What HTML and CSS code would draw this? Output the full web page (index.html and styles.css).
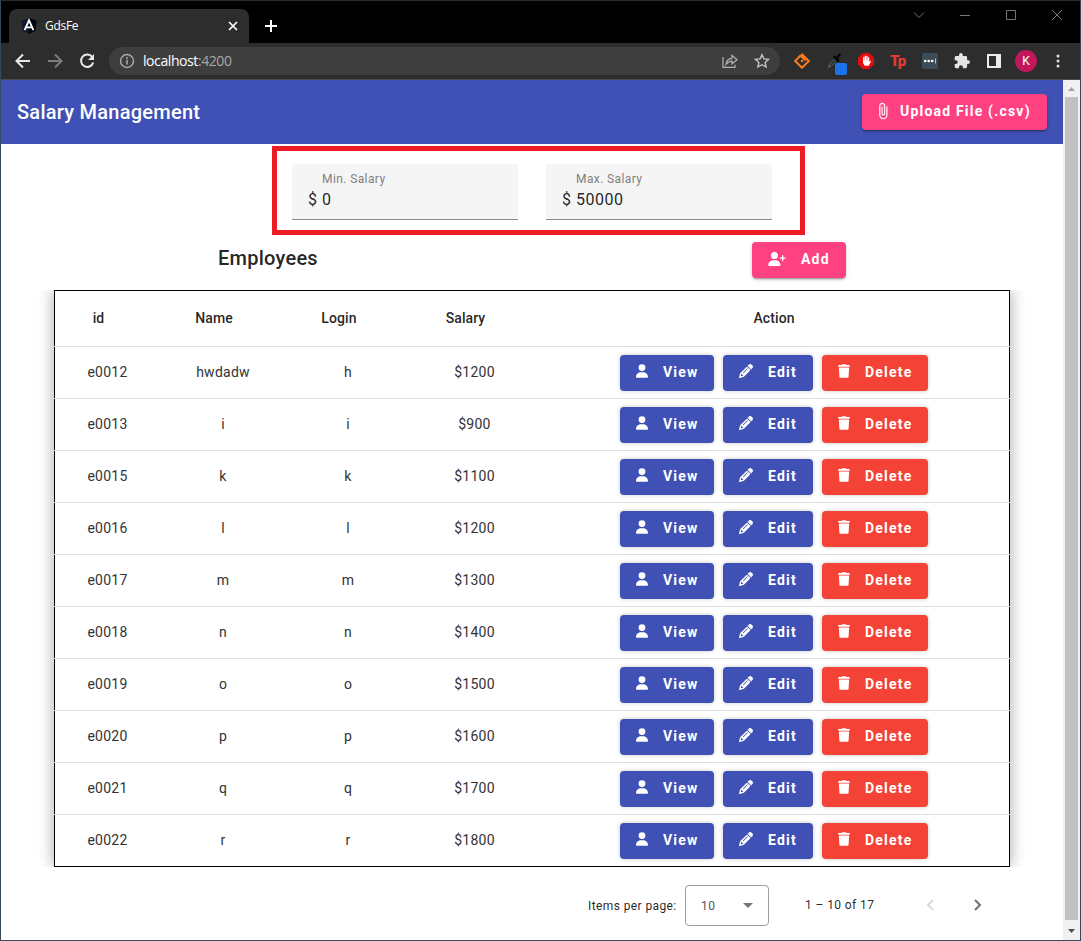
FILE: index.html
```html
<!DOCTYPE html>
<html lang="en">
<head>
<meta charset="utf-8">
<title>GdsFe</title>
<link rel="stylesheet" href="styles.css">
</head>
<body>
<svg class="defs" width="0" height="0">
  <symbol id="user" viewBox="0 0 448 512"><path d="M224 256A128 128 0 1 0 224 0a128 128 0 1 0 0 256zm-45.700 48C79.800 304 0 383.800 0 482.300C0 498.700 13.300 512 29.700 512H418.300c16.400 0 29.700-13.300 29.700-29.700C448 383.800 368.200 304 269.700 304H178.300z"/></symbol>
  <symbol id="user-plus" viewBox="0 0 640 512"><path d="M96 128a128 128 0 1 1 256 0A128 128 0 1 1 96 128zM0 482.300C0 383.800 79.800 304 178.300 304h91.400C368.200 304 448 383.800 448 482.300c0 16.400-13.300 29.700-29.700 29.700H29.700C13.300 512 0 498.700 0 482.300zM504 312V248H440c-13.300 0-24-10.700-24-24s10.700-24 24-24h64V136c0-13.300 10.700-24 24-24s24 10.700 24 24v64h64c13.300 0 24 10.700 24 24s-10.700 24-24 24H552v64c0 13.300-10.700 24-24 24s-24-10.700-24-24z"/></symbol>
  <symbol id="pencil" viewBox="0 0 512 512"><path d="M410.300 231l11.300-11.300-33.900-33.900-62.100-62.100L291.700 89.800l-11.300 11.300-22.600 22.600L58.600 322.900c-10.400 10.400-18 23.300-22.200 37.400L1 480.700c-2.500 8.400-.2 17.500 6.100 23.700s15.300 8.500 23.700 6.100l120.300-35.400c14.100-4.200 27-11.800 37.400-22.200L387.700 253.700 410.300 231zM160 399.400l-9.100 22.700c-4 3.100-8.500 5.400-13.300 6.900L59.400 452l23-78.100c1.400-4.900 3.800-9.400 6.900-13.300l22.700-9.100v32c0 8.800 7.200 16 16 16h32zM362.700 18.700L348.300 33.200 325.700 55.800 314.300 67.100l33.900 33.900 62.100 62.100 33.900 33.900 11.300-11.300 22.600-22.600 14.500-14.500c25-25 25-65.500 0-90.500L453.300 18.700c-25-25-65.500-25-90.500 0zm-47.400 168l-144 144c-6.200 6.200-16.400 6.200-22.600 0s-6.200-16.400 0-22.600l144-144c6.200-6.200 16.400-6.200 22.600 0s6.200 16.400 0 22.600z"/></symbol>
  <symbol id="trash" viewBox="0 0 448 512"><path d="M135.200 17.700L128 32H32C14.300 32 0 46.300 0 64S14.300 96 32 96H416c17.700 0 32-14.300 32-32s-14.300-32-32-32H320l-7.200-14.300C307.400 6.800 296.300 0 284.200 0H163.800c-12.100 0-23.200 6.800-28.600 17.700zM416 128H32L53.200 467c1.600 25.300 22.600 45 47.900 45H346.900c25.300 0 46.300-19.700 47.900-45L416 128z"/></symbol>
</svg>
<div class="window">
  <div class="tabstrip">
    <div class="tab">
      <svg class="favicon" width="16" height="16" viewBox="0 0 16 16"><path d="M8 0l7.500 2.700-1.100 10L8 16l-6.400-3.300-1.100-10z" fill="#111a2b"/><path d="M8 0l7.500 2.700-1.100 10L8 16z" fill="#02040c"/><path d="M3.600 12.200L8 2.300l4.400 9.900M5.200 9.300h5.600" fill="none" stroke="#fff" stroke-width="1.800"/></svg>
      <span class="tab-title">GdsFe</span>
      <svg class="tab-close" width="10" height="10" viewBox="0 0 10 10"><path d="M1 1l8 8M9 1l-8 8" stroke="#fff" stroke-width="1.700"/></svg>
    </div>
    <svg class="new-tab" width="12" height="12" viewBox="0 0 12 12"><path d="M6 0v12M0 6h12" stroke="#fff" stroke-width="2"/></svg>
    <div class="controls">
      <svg width="12" height="12" viewBox="0 0 12 12"><path d="M1 3.500l5 5 5-5"/></svg>
      <svg width="12" height="12" viewBox="0 0 12 12"><path d="M1 6.500h10"/></svg>
      <svg width="12" height="12" viewBox="0 0 12 12"><path d="M1.500 1.500h9v9h-9z"/></svg>
      <svg width="12" height="12" viewBox="0 0 12 12"><path d="M1 1l10 10M11 1L1 11"/></svg>
    </div>
  </div>
  <div class="toolbar">
    <div class="nav">
      <svg width="16" height="16" viewBox="0 0 16 16"><path d="M15 8H2M8 1.500L1.500 8 8 14.500" fill="none" stroke="#e8e8e8" stroke-width="2"/></svg>
      <svg width="16" height="16" viewBox="0 0 16 16"><path d="M1 8h13M8 1.500L14.500 8 8 14.500" fill="none" stroke="#7c7c7c" stroke-width="2"/></svg>
      <svg width="16" height="16" viewBox="0 0 16 16"><path d="M13.200 4A6.200 6.200 0 1 0 14.200 9.500" fill="none" stroke="#e8e8e8" stroke-width="2"/><path d="M15 1v6H9z" fill="#e8e8e8"/></svg>
    </div>
    <div class="address">
      <svg width="16" height="16" viewBox="0 0 16 16"><circle cx="8" cy="8" r="6.500" fill="none" stroke="#aaa" stroke-width="1.400"/><path d="M7.200 7h1.600v4.500H7.200zM7.200 4.300h1.600v1.600H7.200z" fill="#aaa"/></svg>
      <span class="url">localhost<span class="port">:4200</span></span>
      <svg class="share" width="16" height="16" viewBox="0 0 16 16"><path d="M1 4v10.300h12v-2.500M4 11.500c.5-4 2.500-6 6-6.200V2.300l5 4.500-5 4.200V8.200C7.300 8.200 5.500 9.500 4 11.500z" fill="none" stroke="#b4b4b4" stroke-width="1.200"/></svg>
      <svg width="16" height="16" viewBox="0 0 16 16"><path d="M8 1.700l1.900 4.200 4.600.5-3.400 3 1 4.600L8 11.700 3.900 14l1-4.600-3.400-3 4.600-.5z" fill="none" stroke="#c4c4c4" stroke-width="1.400"/></svg>
    </div>
    <div class="extensions">
      <svg width="16" height="16" viewBox="0 0 16 16"><path d="M7 2L1.200 8 8 14.800 14.800 8 7.500.7M6.500 2.500L11.500 7.500" fill="none" stroke="#fa7b20" stroke-width="2"/><circle cx="8" cy="8" r="1.300" fill="#fa7b20"/></svg>
      <span class="picker">
        <svg width="16" height="16" viewBox="0 0 16 16"><path d="M2.500 14.500L4 11l5-5.500 1.500 1.500-5 5.500z" fill="#17221a" stroke="#5f8a6b" stroke-width=".8"/><path d="M8.500 4l3.500 3.500M10.500 5.500L13.500 2" stroke="#050505" stroke-width="2.600" stroke-linecap="round"/></svg>
        <span class="picker-badge"></span>
      </span>
      <svg width="16" height="16" viewBox="0 0 16 16"><path d="M4.700 0h6.600L16 4.700v6.600L11.300 16H4.700L0 11.300V4.700z" fill="#e40d0d"/><path d="M5.800 9V4.500M7.400 8V3.200M9 8V3.400M10.600 9V4.800" stroke="#fff" stroke-width="1.300" stroke-linecap="round"/><path d="M5.200 7.500h6V9l1.200-1.300.6.700-2.200 4.400H6.800L5.200 10.500z" fill="#fff"/></svg>
      <span class="tp">Tp</span>
      <svg width="16" height="16" viewBox="0 0 16 16"><rect width="16" height="16" rx="1.500" fill="#3c4c56"/><circle cx="3.200" cy="8" r="1.300" fill="#fff"/><circle cx="6.700" cy="8" r="1.300" fill="#fff"/><circle cx="10.200" cy="8" r="1.300" fill="#fff"/><path d="M13 5.500h1v5h-1z" fill="#b8c0c4"/></svg>
      <svg width="16" height="16" viewBox="1 1 22 22"><path fill="#e4e4e4" d="M20.500 11H19V7c0-1.100-.9-2-2-2h-4V3.500a2.500 2.500 0 0 0-5 0V5H4c-1.100 0-2 .9-2 2v3.800h1.500a2.700 2.700 0 0 1 0 5.400H2V20c0 1.100.9 2 2 2h3.800v-1.500a2.700 2.700 0 0 1 5.400 0V22H17c1.100 0 2-.9 2-2v-4h1.500a2.500 2.500 0 0 0 0-5z"/></svg>
      <svg class="panel" width="14" height="14" viewBox="0 0 14 14"><path fill="#ececec" fill-rule="evenodd" d="M0 0h14v14H0zM2 2v10h7V2z"/></svg>
      <span class="avatar">K</span>
      <svg class="menu" width="4" height="14" viewBox="0 0 4 14"><circle cx="2" cy="2" r="1.500" fill="#e4e4e4"/><circle cx="2" cy="7" r="1.500" fill="#e4e4e4"/><circle cx="2" cy="12" r="1.500" fill="#e4e4e4"/></svg>
    </div>
  </div>
  <div class="viewport">
    <main class="page">
      <header class="app-bar">
        <h1>Salary Management</h1>
        <button class="btn accent upload"><svg width="18" height="18" viewBox="0 0 24 24"><path d="M16.500 6v11.500c0 2.210-1.790 4-4 4s-4-1.790-4-4V5c0-1.380 1.120-2.500 2.500-2.500s2.500 1.120 2.500 2.500v10.500c0 .55-.45 1-1 1s-1-.45-1-1V6H10v9.500c0 1.380 1.120 2.500 2.500 2.500s2.500-1.120 2.500-2.500V5c0-2.210-1.790-4-4-4S7 2.790 7 5v12.500c0 3.040 2.460 5.500 5.500 5.500s5.500-2.460 5.500-5.500V6h-1.500z"/></svg><span>Upload File (.csv)</span></button>
      </header>
      <section class="filters">
        <label class="field"><span class="label">Min. Salary</span><span class="value"><span class="prefix">$</span><span>0</span></span></label>
        <label class="field"><span class="label">Max. Salary</span><span class="value"><span class="prefix">$</span><span>50000</span></span></label>
      </section>
      <section class="heading">
        <h2>Employees</h2>
        <button class="btn accent add"><svg width="18" height="14"><use href="#user-plus"/></svg><span>Add</span></button>
      </section>
      <section class="table" id="table">
        <div class="row head"><span>id</span><span>Name</span><span>Login</span><span>Salary</span><span>Action</span></div>
      </section>
      <footer class="paginator">
        <span class="per-page">Items per page:</span>
        <div class="select"><span>10</span><svg width="10" height="5" viewBox="0 0 10 5"><path d="M0 0h10L5 5z" fill="#757575"/></svg></div>
        <span class="range">1 – 10 of 17</span>
        <svg class="prev" width="8" height="12" viewBox="0 0 8 12"><path d="M7 1L2 6l5 5" fill="none" stroke="#d9d9d9" stroke-width="1.800"/></svg>
        <svg class="next" width="8" height="12" viewBox="0 0 8 12"><path d="M1 1l5 5-5 5" fill="none" stroke="#707070" stroke-width="2"/></svg>
      </footer>
    </main>
    <div class="scrollbar">
      <svg width="17" height="17" viewBox="0 0 17 17"><path d="M5 11h7L8.500 7z" fill="#a3a3a3"/></svg>
      <div class="thumb"></div>
      <svg width="17" height="20" viewBox="0 0 17 20"><path d="M5 9h7l-3.500 4z" fill="#505050"/></svg>
    </div>
  </div>
</div>
<script src="app.js"></script>
</body>
</html>
```
FILE: styles.css
```css
* { box-sizing: border-box; }
body { margin: 0; font-family: Roboto, "Liberation Sans", sans-serif; color: rgba(0, 0, 0, .87); }
svg { display: block; flex: none; }
.defs { position: absolute; }
h1, h2 { margin: 0; font-weight: 500; }
.window { width: 1081px; height: 941px; display: flex; flex-direction: column; border: 1px solid #34495a; border-top-color: #2b2b2b; overflow: hidden; background: #000; }
.tabstrip { height: 42px; flex: none; display: flex; align-items: flex-start; font-family: "Open Sans", sans-serif; }
.tab { width: 240px; height: 34px; margin: 8px 0 0 8px; padding: 0 11px 0 12px; display: flex; align-items: center; border-radius: 8px 8px 0 0; background: #2d2d2d; color: #fff; font-size: 12px; letter-spacing: -.3px; }
.tab-title { margin-left: 8px; padding-bottom: 1px; }
.tab-close { margin-left: auto; }
.new-tab { margin: 19px 0 0 16px; }
.controls { display: flex; gap: 34px; margin: 8px 17px 0 auto; }
.controls path { fill: none; stroke: #767676; }
.toolbar { height: 37px; flex: none; display: flex; align-items: center; background: #2d2d2d; border-bottom: 1px solid #4b4b4b; }
.nav { display: flex; gap: 16px; margin-left: 14px; }
.address { width: 671px; height: 28px; margin-left: 14px; padding: 0 10px; display: flex; align-items: center; border-radius: 14px; background: #3e3e3e; }
.url { margin-left: 8px; padding-bottom: 1px; font: 14px "Open Sans", sans-serif; color: #fff; letter-spacing: -.42px; }
.port { color: #a8a8a8; }
.share { margin: 0 16px 0 auto; }
.extensions { display: flex; align-items: center; margin-left: 14px; gap: 16px; }
.picker { position: relative; }
.picker-badge { position: absolute; left: 9px; top: 10px; width: 12px; height: 12px; border-radius: 2px; background: #1a73e8; }
.tp { width: 16px; font-size: 15px; font-weight: 900; letter-spacing: -1px; color: #e53935; }
.panel { margin-left: 1px; }
.avatar { width: 22px; height: 22px; margin-left: -2px; border-radius: 50%; background: #c2185b; color: #fff; font-size: 12px; line-height: 22px; text-align: center; }
.menu { margin-left: 3px; }
.viewport { flex: 1; min-height: 0; display: flex; background: #fff; }
.page { width: 1062px; }
.app-bar { height: 64px; padding: 0 16px; display: flex; align-items: center; justify-content: space-between; background: #3f51b5; color: #fff; }
h1 { font-size: 20px; letter-spacing: .25px; }
.btn { height: 36px; border: 0; border-radius: 4px; padding: 0 0 2px 16px; display: flex; align-items: center; color: #fff; font: 700 14px Roboto, sans-serif; letter-spacing: 1.2px; white-space: nowrap; box-shadow: 0 3px 1px -2px rgba(0, 0, 0, .2), 0 2px 2px rgba(0, 0, 0, .14), 0 1px 5px rgba(0, 0, 0, .12); }
.btn svg { fill: #fff; }
.accent { background: #ff4081; }
.upload { width: 185px; padding-left: 12px; }
.upload span { margin-left: 8px; }
.filters { width: 533px; height: 89px; margin: 2px 0 0 271px; padding: 13px 0 0 15px; display: flex; gap: 28px; border: 5px solid #ed1c24; }
.field { width: 226px; height: 56px; padding: 7px 16px 0; border-radius: 4px 4px 0 0; border-bottom: 1px solid #8c8c8c; background: #f5f5f5; }
.label { display: block; margin-left: 14px; font-size: 12px; line-height: 16px; letter-spacing: .4px; color: #808080; }
.value { display: flex; gap: 4px; font-size: 16px; line-height: 26px; letter-spacing: .5px; }
.prefix { width: 10px; }
.heading { width: 628px; height: 55px; margin-left: 217px; padding-top: 7px; display: flex; justify-content: space-between; }
h2 { font-size: 20px; line-height: 32px; letter-spacing: .25px; }
.add { width: 94px; }
.add span { margin-left: 15px; }
.table { width: 956px; height: 577px; margin-left: 53px; border: 1px solid #000; box-shadow: 0 0 15px rgba(0, 0, 0, .35); clip-path: inset(0 -16px); }
.row { height: 52px; margin: 0 -1px; padding: 0 1px; display: grid; grid-template-columns: 105px 126px 124px 129px 470px; align-items: center; text-align: center; font-size: 14px; letter-spacing: .25px; border-bottom: 1px solid #e0e0e0; }
.row:last-child { border-bottom-color: transparent; }
.row > span { padding-bottom: 1px; }
.row:not(.head) > span { color: #333; }
.head { height: 56px; font-weight: 500; letter-spacing: .1px; }
.head span:not(:last-child) { padding-right: 18px; }
.actions { display: flex; justify-content: center; gap: 9px; }
.actions .btn { box-shadow: 0 0 4px rgba(0, 0, 0, .22); }
.primary { width: 94px; background: #3f51b5; }
.primary.edit { width: 90px; }
.warn { width: 106px; background: #f44336; }
.actions .btn span { margin-left: 15px; }
.actions .btn svg { margin-bottom: 1px; }
.paginator { height: 73px; display: flex; align-items: center; padding: 4px 81px 0 587px; font-size: 12px; letter-spacing: .4px; }
.per-page { width: 97px; }
.select { width: 84px; height: 41px; padding: 0 15px; display: flex; align-items: center; justify-content: space-between; border: 1px solid #9e9e9e; border-radius: 4px; color: #555; }
.range { width: 121px; margin-left: 36px; padding-bottom: 2px; }
.prev, .next { margin-bottom: 1px; }
.next { margin-left: 40px; }
.scrollbar { width: 17px; display: flex; flex-direction: column; background: #f1f1f1; }
.thumb { flex: 1; margin: 0 2px; background: #c1c1c1; }
```
FILE: app.js
```js
const rows = [
  ["e0012", "hwdadw", "h", 1200], ["e0013", "i", "i", 900], ["e0015", "k", "k", 1100],
  ["e0016", "l", "l", 1200], ["e0017", "m", "m", 1300], ["e0018", "n", "n", 1400],
  ["e0019", "o", "o", 1500], ["e0020", "p", "p", 1600], ["e0021", "q", "q", 1700],
  ["e0022", "r", "r", 1800]
];
document.getElementById("table").insertAdjacentHTML("beforeend", rows.map(([id, name, login, salary]) => `
  <div class="row"><span>${id}</span><span>${name}</span><span>${login}</span><span>$${salary}</span>
    <div class="actions">
      <button class="btn primary"><svg width="12" height="14"><use href="#user"/></svg><span>View</span></button>
      <button class="btn primary edit"><svg width="14" height="14"><use href="#pencil"/></svg><span>Edit</span></button>
      <button class="btn warn"><svg width="12" height="14"><use href="#trash"/></svg><span>Delete</span></button>
    </div>
  </div>`).join(""));
```
